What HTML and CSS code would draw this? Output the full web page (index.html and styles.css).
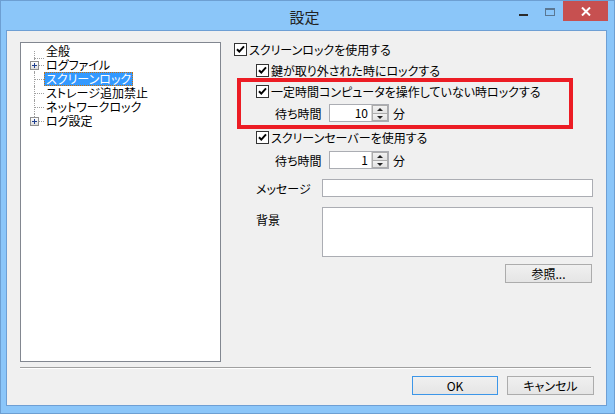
FILE: index.html
```html
<!DOCTYPE html>
<html>
<head>
<meta charset="utf-8">
<title>設定</title>
<link rel="stylesheet" href="styles.css">
</head>
<body>
<div class="window">
  <div class="titlebar">
    <div></div>
    <div class="title">設定</div>
    <div class="caption">
      <span class="cap-btn cap-min"><i></i></span>
      <span class="cap-btn cap-max"><i></i></span>
      <span class="cap-btn cap-close">
        <svg width="10" height="9" viewBox="0 0 10 9"><path d="M1 0.5 L9 8.5 M9 0.5 L1 8.5" stroke="#fff" stroke-width="2"/></svg>
      </span>
    </div>
  </div>

  <div class="client">
    <div class="main">
      <ul class="tree">
        <li class="node first"><span class="line"></span><span class="label">全般</span></li>
        <li class="node"><span class="line"></span><span class="plus"></span><span class="label">ログファイル</span></li>
        <li class="node"><span class="line"></span><span class="label selected">スクリーンロック</span></li>
        <li class="node"><span class="line"></span><span class="label">ストレージ追加禁止</span></li>
        <li class="node"><span class="line"></span><span class="label">ネットワークロック</span></li>
        <li class="node last"><span class="line"></span><span class="plus"></span><span class="label">ログ設定</span></li>
      </ul>

      <div class="panel">
        <label class="check-row r1"><span class="check"></span>スクリーンロックを使用する</label>
        <label class="check-row sub r2"><span class="check"></span>鍵が取り外された時にロックする</label>
        <label class="check-row sub r3"><span class="check"></span>一定時間コンピュータを操作していない時ロックする</label>
        <div class="wait-row w1">
          <span class="wait-label">待ち時間</span>
          <span class="spin"><span class="spin-value">10</span><span class="spin-btns"><span class="up"></span><span class="down"></span></span></span>
          <span class="unit">分</span>
        </div>
        <label class="check-row sub r4"><span class="check"></span>スクリーンセーバーを使用する</label>
        <div class="wait-row w2">
          <span class="wait-label">待ち時間</span>
          <span class="spin"><span class="spin-value">1</span><span class="spin-btns"><span class="up"></span><span class="down"></span></span></span>
          <span class="unit">分</span>
        </div>
        <div class="field-row msg">
          <span class="field-label">メッセージ</span>
          <span class="textbox"></span>
        </div>
        <div class="field-row bg">
          <span class="field-label">背景</span>
          <span class="textbox tall"></span>
        </div>
        <div class="browse-row"><button class="btn">参照...</button></div>

        <div class="highlight"></div>
      </div>
    </div>

    <div class="separator"></div>

    <div class="actions">
      <button class="btn default">OK</button>
      <button class="btn">キャンセル</button>
    </div>
  </div>
</div>
</body>
</html>
```

FILE: styles.css
```css
* {box-sizing:border-box;}
html, body {margin:0; padding:0; background:#fff;}
body {font-family:"Noto Sans CJK JP","Noto Sans",sans-serif; font-size:12px; color:#000;
  font-feature-settings:"palt";}

.window {width:615px; height:414px; background:#8bc6f9; border:1px solid #6d9fd2;
  display:flex; flex-direction:column;}

/* title bar */
.titlebar {height:29px; display:grid; grid-template-columns:1fr auto 1fr;}
.title {font-size:15px; line-height:29px; color:#222; padding-top:1px; margin-left:-6px;}
.caption {display:flex; justify-content:flex-end; align-items:flex-start; padding-right:6px;}
.cap-btn {height:20px; display:flex; align-items:center; justify-content:center;}
.cap-min {width:26px;}
.cap-min i {display:block; width:9px; height:2px; background:#2b2b2b; margin-top:7px;}
.cap-max {width:27px;}
.cap-max i {display:block; width:10px; height:8px; border:1px solid #5a7792; border-top-width:2px; margin-top:1px;}
.cap-close {width:45px; background:#c75050;}
.cap-close svg {display:block;}

/* client area */
.client {flex:1; margin:0 7px 7px 5px; background:#f0f0f0; border:1px solid #6e9fd4;
  padding-top:11px; display:flex; flex-direction:column;}
.main {display:flex; height:320px; padding-left:13px;}

/* tree */
.tree {list-style:none; margin:0; padding:1px 0 0 0; width:201px; height:320px;
  background:#fff; border:1px solid #828790;}
.node {position:relative; height:14px; line-height:14px; padding-left:23px; display:flex;}
.line {position:absolute; left:13px; top:0; bottom:0; border-left:1px dotted #a0a0a0;}
.first .line {top:7px;}
.last .line {bottom:7px;}
.line::after {content:""; position:absolute; left:0; top:7px; width:9px; border-top:1px dotted #a0a0a0;}
.plus {position:absolute; left:9px; top:3px; width:9px; height:9px; border:1px solid #8f8f8f;
  background:linear-gradient(#ffffff,#dcdcdc);}
.plus::before {content:""; position:absolute; left:1px; top:3px; width:5px; height:1px; background:#1f3f8f;}
.plus::after {content:""; position:absolute; left:3px; top:1px; width:1px; height:5px; background:#1f3f8f;}
.label {padding:0 2px; height:14px; line-height:14px; white-space:nowrap;}
.label.selected {background:#3399ff; color:#fff; outline:1px dotted #c8700a; outline-offset:-1px;}

/* right panel */
.panel {position:relative; flex:1; margin-left:13px; margin-right:13px;
  display:flex; flex-direction:column; padding-top:1px;}
.check-row {display:flex; align-items:center; height:13px; gap:2px; white-space:nowrap;}
.check-row.sub {margin-left:22px;}
.r2 {margin-top:8px;}
.r3 {margin-top:8px;}
.r4 {margin-top:9px;}
.check {width:13px; height:13px; border:1px solid #333; background:#fff; flex:none;
  background-image:url("data:image/svg+xml,%3Csvg xmlns='http://www.w3.org/2000/svg' width='11' height='11'%3E%3Cpath d='M2 5.2 L4.3 7.6 L9 2.4' fill='none' stroke='%23000' stroke-width='2'/%3E%3C/svg%3E");
  background-repeat:no-repeat; background-position:0 0;}

.wait-row {display:flex; align-items:center; margin-left:41px; height:18px;}
.w1 {margin-top:6px;}
.w2 {margin-top:7px;}
.wait-label {width:54px;}
.unit {margin-left:4px;}
.spin {display:flex; width:60px; height:18px; border:1px solid #abadb3; background:#fff;}
.spin-value {flex:1; text-align:right; padding-right:3px; line-height:16px;}
.spin-btns {width:17px; display:flex; flex-direction:column; border-left:1px solid #d5d5d5;}
.spin-btns span {flex:1; position:relative; background:linear-gradient(#f2f2f2,#e2e2e2); border:1px solid #acacac;}
.spin-btns .up {border-bottom:none;}
.spin-btns .up::after {content:""; position:absolute; left:4px; top:2px; border:3px solid transparent; border-bottom:3px solid #222; border-top:none;}
.spin-btns .down::after {content:""; position:absolute; left:4px; top:2px; border:3px solid transparent; border-top:3px solid #222; border-bottom:none;}

.field-row {display:flex; margin-left:22px;}
.msg {margin-top:10px; align-items:center;}
.bg {margin-top:10px;}
.bg .field-label {padding-top:4px;}
.field-label {width:66px;}
.textbox {width:271px; height:18px; border:1px solid #abadb3; background:#fff;}
.textbox.tall {height:50px;}
.browse-row {display:flex; justify-content:flex-end; margin-top:7px; padding-right:1px;}

.btn {font:inherit; font-size:12px; height:19px; width:87px; padding:0; color:#000;
  border:1px solid #acacac; background:linear-gradient(#f0f0f0,#e5e5e5);}
.btn.default {border-color:#3c96e8; width:86px;}

.highlight {position:absolute; left:3px; top:36px; width:336px; height:51px; border:4px solid #ec1c24;}

/* bottom */
.separator {margin:5px 15px 0 13px; height:2px; border-top:1px solid #a0a0a0; border-bottom:1px solid #fff;}
.actions {display:flex; justify-content:flex-end; gap:9px; margin-top:7px; padding-right:12px;}
```
